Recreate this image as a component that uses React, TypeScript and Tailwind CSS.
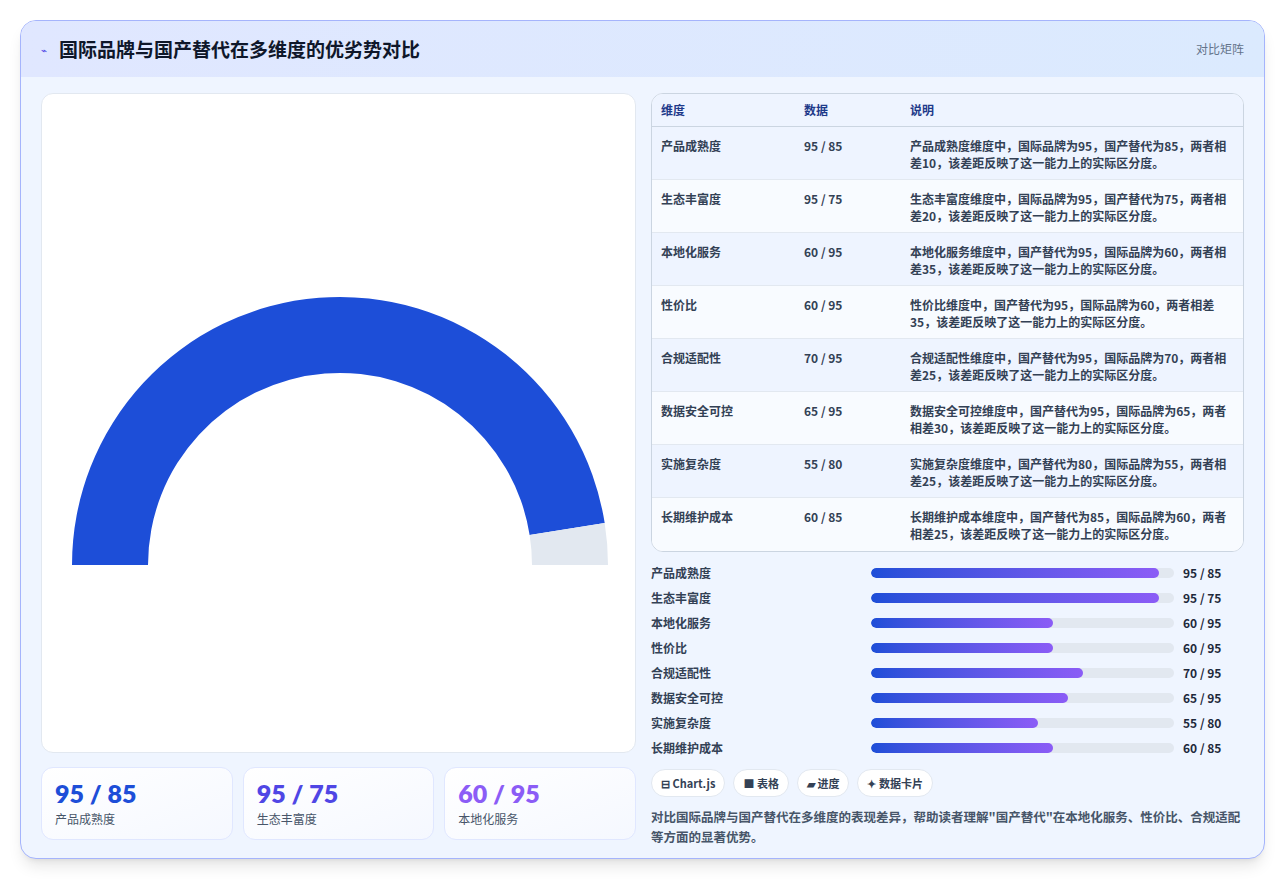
import React from "react";

const rows = [
  ["产品成熟度", "95 / 85", "产品成熟度维度中，国际品牌为95，国产替代为85，两者相差10，该差距反映了这一能力上的实际区分度。", 95],
  ["生态丰富度", "95 / 75", "生态丰富度维度中，国际品牌为95，国产替代为75，两者相差20，该差距反映了这一能力上的实际区分度。", 95],
  ["本地化服务", "60 / 95", "本地化服务维度中，国产替代为95，国际品牌为60，两者相差35，该差距反映了这一能力上的实际区分度。", 60],
  ["性价比", "60 / 95", "性价比维度中，国产替代为95，国际品牌为60，两者相差35，该差距反映了这一能力上的实际区分度。", 60],
  ["合规适配性", "70 / 95", "合规适配性维度中，国产替代为95，国际品牌为70，两者相差25，该差距反映了这一能力上的实际区分度。", 70],
  ["数据安全可控", "65 / 95", "数据安全可控维度中，国产替代为95，国际品牌为65，两者相差30，该差距反映了这一能力上的实际区分度。", 65],
  ["实施复杂度", "55 / 80", "实施复杂度维度中，国产替代为80，国际品牌为55，两者相差25，该差距反映了这一能力上的实际区分度。", 55],
  ["长期维护成本", "60 / 85", "长期维护成本维度中，国产替代为85，国际品牌为60，两者相差25，该差距反映了这一能力上的实际区分度。", 60],
] as const;

function Gauge() {
  const cx = 298, cy = 471, R = 268, r = 192;
  const pt = (rad: number, a: number) => [cx + rad * Math.cos(a), cy - rad * Math.sin(a)];
  const a0 = Math.PI, a1 = Math.PI * (1 - 0.95), a2 = 0;
  const seg = (s: number, e: number) => {
    const [x1, y1] = pt(R, s), [x2, y2] = pt(R, e), [x3, y3] = pt(r, e), [x4, y4] = pt(r, s);
    const large = s - e > Math.PI ? 1 : 0;
    return `M${x1} ${y1} A${R} ${R} 0 ${large} 1 ${x2} ${y2} L${x3} ${y3} A${r} ${r} 0 ${large} 0 ${x4} ${y4}Z`;
  };
  return (
    <svg width="595" height="660" className="block">
      <path d={seg(a0, a1)} fill="#1d4ed8" />
      <path d={seg(a1, a2)} fill="#e2e8f0" />
    </svg>
  );
}

export default function App() {
  return (
    <div className="min-h-[880px] bg-white p-5" style={{ fontFamily: '"Noto Sans CJK SC", "Noto Sans", sans-serif' }}>
      <div className="rounded-2xl border border-[#a5b4fc] bg-[#eff5ff] overflow-hidden shadow-lg h-[839px] flex flex-col">
        <div className="h-[56px] flex items-center justify-between px-5 bg-gradient-to-r from-[#e0e7ff] to-[#dbeafe]">
          <div className="flex items-center gap-3">
            <span className="text-[#4f46e5] text-[10px]">⌁</span>
            <span className="text-[19px] font-bold text-[#0f172a]">国际品牌与国产替代在多维度的优劣势对比</span>
          </div>
          <span className="text-[12px] text-[#64748b]">对比矩阵</span>
        </div>
        <div className="flex gap-[15px] px-5 pt-[16px]">
          <div className="w-[595px] flex flex-col gap-[14px]">
            <div className="h-[660px] rounded-xl bg-white border border-[#e2e8f0] overflow-hidden">
              <Gauge />
            </div>
            <div className="flex gap-[10px]">
              {[["95 / 85", "产品成熟度", "text-[#1d4ed8]"], ["95 / 75", "生态丰富度", "text-[#4f46e5]"], ["60 / 95", "本地化服务", "text-[#8b5cf6]"]].map(([v, l, c]) => (
                <div key={l} className="flex-1 h-[73px] rounded-xl bg-gradient-to-br from-white to-[#f5f8ff] border border-[#e0e7ff] px-[13px] pt-[10px]">
                  <div className={`text-[25px] font-extrabold leading-[30px] ${c}`} style={{ fontFamily: "Lato, sans-serif" }}>{v}</div>
                  <div className="text-[12px] text-[#475569] mt-[2px]">{l}</div>
                </div>
              ))}
            </div>
          </div>
          <div className="w-[595px] flex flex-col">
            <div className="rounded-xl border border-[#cbd5e1] overflow-hidden bg-white">
              <div className="h-[33px] flex items-center text-[12px] font-semibold text-[#1e3a8a] bg-[#eef4ff] border-b border-[#cbd5e1]">
                <div className="w-[152px] pl-[9px]">维度</div>
                <div className="w-[106px]">数据</div>
                <div>说明</div>
              </div>
              {rows.map(([d, v, t], i) => (
                <div key={d} className={`h-[53px] flex text-[12px] font-semibold text-[#334155] pt-[10px] leading-[17px] ${i < 7 ? "border-b border-[#e2e8f0]" : ""} ${i % 2 === 0 ? "bg-[#eef4ff]" : "bg-[#f8fbff]"}`}>
                  <div className="w-[152px] pl-[9px] shrink-0">{d}</div>
                  <div className="w-[106px] shrink-0">{v}</div>
                  <div className="pr-[14px]">{t}</div>
                </div>
              ))}
            </div>
            <div className="flex flex-col gap-[7px] mt-[12px]">
              {rows.map(([d, v, , p]) => (
                <div key={d} className="flex items-center h-[18px] text-[12px] font-semibold">
                  <div className="w-[220px] text-[#334155]">{d}</div>
                  <div className="w-[303px] h-[10px] rounded-full bg-[#e2e8f0] overflow-hidden">
                    <div className="h-full rounded-full bg-gradient-to-r from-[#1d4ed8] to-[#8b5cf6]" style={{ width: `${p}%` }} />
                  </div>
                  <div className="ml-[9px] text-[#1e293b]">{v}</div>
                </div>
              ))}
            </div>
            <div className="flex gap-[8px] mt-[12px]">
              {["⊟ Chart.js", "■ 表格", "▰ 进度", "✦ 数据卡片"].map((c) => (
                <span key={c} className="h-[28px] px-[9px] flex items-center rounded-full bg-white border border-[#e2e8f0] text-[11px] font-semibold text-[#334155]">{c}</span>
              ))}
            </div>
            <p className="mt-[10px] text-[12.5px] leading-[20px] text-[#475569] font-semibold">对比国际品牌与国产替代在多维度的表现差异，帮助读者理解"国产替代"在本地化服务、性价比、合规适配等方面的显著优势。</p>
          </div>
        </div>
      </div>
    </div>
  );
}
